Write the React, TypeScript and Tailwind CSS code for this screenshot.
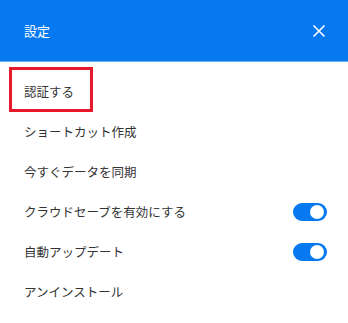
import { useState } from "react";

const FONT = { fontFamily: '"Noto Sans CJK JP", "Noto Sans", sans-serif' };

function Toggle({ on, onClick }: { on: boolean; onClick: () => void }) {
  return (
    <button
      type="button"
      onClick={onClick}
      className={
        "relative h-[18px] w-[34px] shrink-0 rounded-full transition-colors " +
        (on ? "bg-[#0679f0]" : "bg-gray-300")
      }
    >
      <span
        className={
          "absolute top-[2px] h-[14px] w-[14px] rounded-full bg-white transition-all " +
          (on ? "left-[17px]" : "left-[3px]")
        }
      />
    </button>
  );
}

export default function App() {
  const [cloud, setCloud] = useState(true);
  const [auto, setAuto] = useState(true);

  const rows: { label: string; toggle?: [boolean, () => void]; boxed?: boolean }[] = [
    { label: "認証する", boxed: true },
    { label: "ショートカット作成" },
    { label: "今すぐデータを同期" },
    { label: "クラウドセーブを有効にする", toggle: [cloud, () => setCloud(!cloud)] },
    { label: "自動アップデート", toggle: [auto, () => setAuto(!auto)] },
    { label: "アンインストール" },
  ];

  return (
    <div className="h-[323px] w-[348px] overflow-hidden bg-white" style={FONT}>
      <div className="flex h-[62px] items-center justify-between border-b border-[#6fb0f5] bg-[#0679f0] pl-6 pr-[22px]">
        <span className="text-[13px] text-white">設定</span>
        <svg width="14" height="14" viewBox="0 0 14 14" className="text-white">
          <path d="M1.5 1.5l11 11M12.5 1.5l-11 11" stroke="currentColor" strokeWidth="1.6" />
        </svg>
      </div>
      <div className="pt-[10px]">
        {rows.map((r) => (
          <div key={r.label} className="relative flex h-10 items-center justify-between pl-6 pr-[21px]">
            {r.boxed && (
              <div className="absolute left-[9px] top-[-5px] h-[45px] w-[84px] border-[3px] border-[#e5192b]" />
            )}
            <span className="text-[12.5px] text-[#333]">{r.label}</span>
            {r.toggle && <Toggle on={r.toggle[0]} onClick={r.toggle[1]} />}
          </div>
        ))}
      </div>
    </div>
  );
}
